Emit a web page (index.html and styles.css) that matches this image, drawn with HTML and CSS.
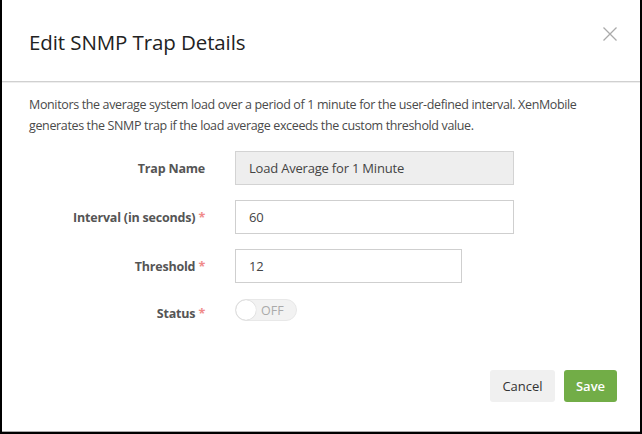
FILE: index.html
```html
<!DOCTYPE html>
<html>
<head>
<meta charset="utf-8">
<link rel="stylesheet" href="styles.css">
</head>
<body>
<div class="frame">
  <div class="dialog">
    <div class="header">
      <h1 class="title">Edit SNMP Trap Details</h1>
      <button class="close" aria-label="Close">
        <svg width="14" height="14" viewBox="0 0 14 14"><path d="M0.5 0.5 L13.5 13.5 M13.5 0.5 L0.5 13.5" stroke="#aaaaaa" stroke-width="1.3" fill="none"/></svg>
      </button>
    </div>
    <div class="body">
      <p class="desc">Monitors the average system load over a period of 1 minute for the user-defined interval. XenMobile generates the SNMP trap if the load average exceeds the custom threshold value.</p>
      <div class="form">
        <div class="row">
          <label class="label">Trap Name</label>
          <div class="input disabled wide">Load Average for 1 Minute</div>
        </div>
        <div class="row">
          <label class="label">Interval (in seconds) <span class="req">*</span></label>
          <div class="input wide">60</div>
        </div>
        <div class="row">
          <label class="label">Threshold <span class="req">*</span></label>
          <div class="input narrow">12</div>
        </div>
        <div class="row status-row">
          <label class="label">Status <span class="req">*</span></label>
          <div class="toggle"><span class="knob"></span><span class="toggle-text">OFF</span></div>
        </div>
      </div>
    </div>
    <div class="footer">
      <button class="btn cancel">Cancel</button>
      <button class="btn save">Save</button>
    </div>
  </div>
</div>
</body>
</html>
```
FILE: styles.css
```css
html, body {
  margin: 0;
  padding: 0;
  background: #fff;
}
body {
  font-family: "Open Sans", "Liberation Sans", sans-serif;
  color: #333;
}
.frame {
  width: 638px;
  height: 432px;
  border-left: 2px solid #000;
  border-right: 2px solid #000;
  border-bottom: 2px solid #000;
  display: flex;
  flex-direction: column;
}
.dialog {
  flex: 1;
  display: flex;
  flex-direction: column;
  border-bottom: 1px solid #a8a8a8;
}
.header {
  height: 81px;
  border-bottom: 1px solid #d0d0d0;
  box-shadow: 0 1px 0 #eee;
  display: flex;
  align-items: flex-start;
  justify-content: space-between;
  padding: 0 22px 0 27px;
}
.title {
  margin: 29px 0 0;
  font-size: 20.5px;
  font-weight: 400;
  letter-spacing: -0.1px;
  color: #222;
  line-height: 26px;
}
.close {
  margin-top: 26px;
  background: none;
  border: 0;
  padding: 0;
  width: 16px;
  height: 16px;
  display: flex;
  align-items: center;
  justify-content: center;
}
.body {
  flex: 1;
  padding: 0 27px;
}
.desc {
  margin: 12px 0 0;
  font-size: 12.5px;
  letter-spacing: -0.36px;
  line-height: 21px;
  color: #4a4a4a;
}
.form {
  margin-top: 15px;
  display: flex;
  flex-direction: column;
  gap: 15px;
}
.row {
  display: flex;
  align-items: center;
}
.label {
  width: 176px;
  text-align: right;
  font-weight: 700;
  font-size: 12.5px;
  letter-spacing: -0.2px;
  color: #555;
  margin-right: 30px;
}
.req {
  color: #f08a8a;
}
.input {
  height: 34px;
  box-sizing: border-box;
  border: 1px solid #cfcfcf;
  padding: 0 13px;
  display: flex;
  align-items: center;
  font-size: 13px;
  letter-spacing: -0.2px;
  color: #444;
}
.input.disabled {
  background: #eeeeee;
  border-color: #d3d3d3;
}
.wide { width: 279px; }
.narrow { width: 227px; }
.status-row .label { padding-top: 7px; }
.toggle {
  width: 62px;
  height: 22px;
  box-sizing: border-box;
  border-radius: 11px;
  background: #f2f2f2;
  border: 1px solid #e8e8e8;
  display: flex;
  align-items: center;
}
.knob {
  width: 20px;
  height: 20px;
  border-radius: 50%;
  background: #fff;
  box-shadow: 0 0 1px rgba(0,0,0,0.3);
}
.toggle-text {
  margin-left: 5px;
  font-size: 12.5px;
  color: #aaa;
}
.footer {
  display: flex;
  justify-content: flex-end;
  gap: 9px;
  padding: 0 23px 29px 0;
}
.btn {
  height: 32px;
  border: 0;
  border-radius: 3px;
  font-family: "Open Sans", "Liberation Sans", sans-serif;
  font-size: 13px;
  padding: 0;
}
.cancel {
  width: 65px;
  background: #f0f0f0;
  color: #333;
}
.save {
  width: 53px;
  background: #72ad47;
  color: #fff;
  font-weight: 600;
}
```
